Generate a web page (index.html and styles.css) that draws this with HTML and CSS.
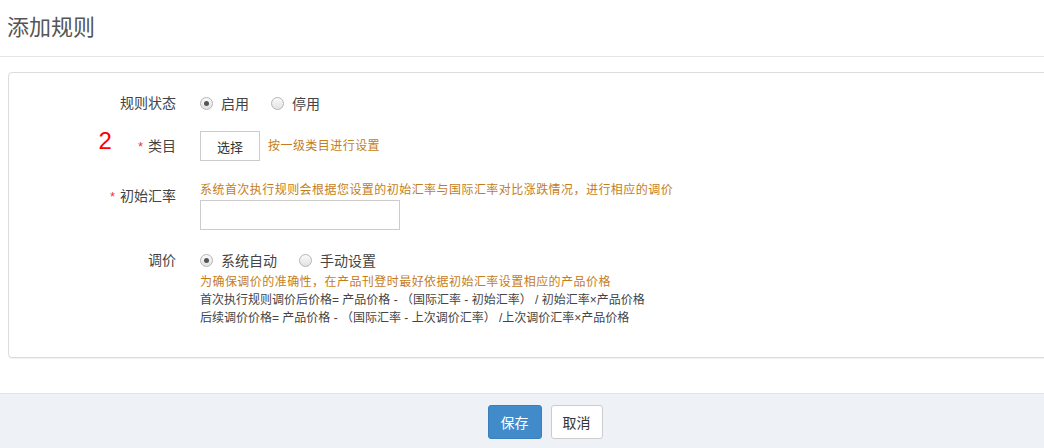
FILE: index.html
```html
<!DOCTYPE html>
<html lang="zh-CN">
<head>
<meta charset="utf-8">
<title>添加规则</title>
<link rel="stylesheet" href="styles.css">
</head>
<body>
<header class="page-head">
  <h1 class="page-title">添加规则</h1>
</header>
<main class="panel">
  <div class="row row-status">
    <div class="label">规则状态</div>
    <div class="field radios">
      <label class="radio"><input type="radio" name="st" checked><span>启用</span></label>
      <label class="radio"><input type="radio" name="st"><span>停用</span></label>
    </div>
  </div>
  <div class="row row-cat">
    <div class="label"><span class="mark-num">2</span><span class="req">*</span>类目</div>
    <div class="field inline">
      <button class="btn-select" type="button">选择</button>
      <span class="hint">按一级类目进行设置</span>
    </div>
  </div>
  <div class="row row-rate">
    <div class="label label-rate"><span class="req">*</span>初始汇率</div>
    <div class="field stack">
      <div class="hint hint-rate">系统首次执行规则会根据您设置的初始汇率与国际汇率对比涨跌情况，进行相应的调价</div>
      <input class="text-input" type="text">
    </div>
  </div>
  <div class="row row-price">
    <div class="label">调价</div>
    <div class="field stack">
      <div class="radios radios-price">
        <label class="radio"><input type="radio" name="adj" checked><span>系统自动</span></label>
        <label class="radio"><input type="radio" name="adj"><span>手动设置</span></label>
      </div>
      <div class="hint line">为确保调价的准确性，在产品刊登时最好依据初始汇率设置相应的产品价格</div>
      <div class="note line">首次执行规则调价后价格= 产品价格 - （国际汇率 - 初始汇率） / 初始汇率×产品价格</div>
      <div class="note line">后续调价价格= 产品价格 - （国际汇率 - 上次调价汇率） /上次调价汇率×产品价格</div>
    </div>
  </div>
</main>
<footer class="actions">
  <button class="btn btn-primary" type="button">保存</button>
  <button class="btn btn-default" type="button">取消</button>
</footer>
</body>
</html>
```
FILE: styles.css
```css
html, body {
  margin: 0;
  padding: 0;
  background: #fff;
  overflow: hidden;
}
body {
  font-family: "Liberation Sans", "Noto Sans CJK SC", sans-serif;
  color: #444;
  font-size: 13px;
  height: 448px;
  display: flex;
  flex-direction: column;
}
.page-head {
  height: 56px;
  border-bottom: 1px solid #e5e5e5;
  display: flex;
  align-items: center;
  padding-left: 7px;
}
.page-title {
  margin: 0;
  font-size: 22px;
  font-weight: normal;
  color: #555;
  line-height: 1;
}
.panel {
  margin: 15px -20px 0 8px;
  border: 1px solid #dcdcdc;
  border-radius: 4px;
  box-shadow: 0 1px 1px rgba(0,0,0,0.06);
  padding: 20px 0 30px 0;
  display: flex;
  flex-direction: column;
}
.row {
  display: grid;
  grid-template-columns: 167px 1fr;
  column-gap: 24px;
}
.label {
  display: flex;
  justify-content: flex-end;
  align-items: flex-start;
  font-size: 14px;
  line-height: 20px;
  color: #444;
  white-space: nowrap;
}
.row-cat { margin-top: 16px; }
.row-cat .label { align-items: center; line-height: 30px; }
.row-rate { margin-top: 19px; }
.row-price { margin-top: 20px; }
.label-rate { padding-top: 4px; }
.req {
  color: #e4393c;
  font-size: 13px;
  margin-right: 5px;
  line-height: 20px;
  position: relative;
  top: 1px;
}
.mark-num {
  color: #ff0000;
  font-size: 24px;
  line-height: 24px;
  margin-right: 26px;
  margin-bottom: 10px;
}
.field { font-size: 13px; }
.radios {
  display: flex;
  align-items: center;
  height: 20px;
}
.radios-price { margin-bottom: 3px; }
.radio {
  display: inline-flex;
  align-items: center;
  margin-right: 22px;
  font-size: 14px;
  color: #444;
}
.radio input {
  -webkit-appearance: none;
  appearance: none;
  width: 13px;
  height: 13px;
  margin: 0 8px 0 0;
  border: 1px solid #b5b5b5;
  border-radius: 50%;
  background: linear-gradient(#fafafa, #e2e2e2);
  box-sizing: border-box;
  position: relative;
}
.radio input:checked::after {
  content: "";
  position: absolute;
  left: 3px;
  top: 3px;
  width: 5px;
  height: 5px;
  border-radius: 50%;
  background: #555;
}
.inline {
  display: flex;
  align-items: center;
}
.btn-select {
  width: 60px;
  height: 30px;
  border: 1px solid #cccccc;
  background: #fff;
  font-family: inherit;
  font-size: 13px;
  color: #333;
  padding: 0;
  margin-right: 8px;
}
.hint {
  color: #c47d1c;
  font-size: 12px;
  line-height: 18px;
  letter-spacing: 0.45px;
}
.hint-rate { line-height: 17px; }
.stack {
  display: flex;
  flex-direction: column;
  align-items: flex-start;
}
.text-input {
  width: 200px;
  height: 30px;
  box-sizing: border-box;
  border: 1px solid #cccccc;
  margin-top: 1px;
  padding: 0 6px;
}
.line { line-height: 18px; }
.note {
  font-size: 12px;
  color: #444;
  letter-spacing: 0;
}
.actions {
  margin-top: 35px;
  flex: 1;
  background: #eef1f6;
  border-top: 1px solid #e1e5ea;
  display: flex;
  justify-content: center;
  align-items: flex-start;
  padding-top: 11px;
  padding-left: 46px;
  gap: 9px;
}
.btn {
  height: 34px;
  border-radius: 3px;
  font-family: inherit;
  font-size: 14px;
  padding: 0;
}
.btn-primary {
  width: 54px;
  background: #428bca;
  border: 1px solid #3a7fbb;
  color: #fff;
}
.btn-default {
  width: 52px;
  background: #fff;
  border: 1px solid #cccccc;
  color: #333;
}
```
